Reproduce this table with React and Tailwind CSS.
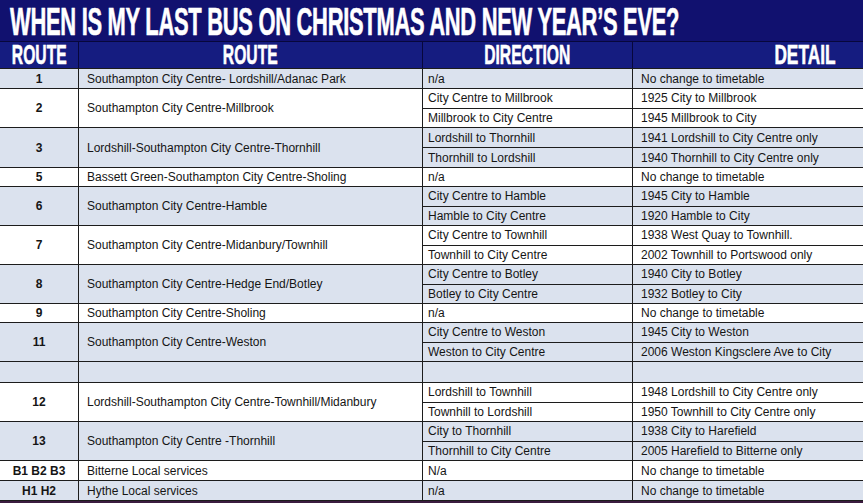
const light = "bg-[#dbe2ee]";
const white = "bg-white";

const rows = [
  { no: "1", route: "Southampton City Centre- Lordshill/Adanac Park", h: "h-[20px]", bg: light, subs: [["n/a", "No change to timetable"]] },
  { no: "2", route: "Southampton City Centre-Millbrook", h: "h-[39px]", bg: white, subs: [["City Centre to Millbrook", "1925 City to Millbrook"], ["Millbrook to City Centre", "1945 Millbrook to City"]] },
  { no: "3", route: "Lordshill-Southampton City Centre-Thornhill", h: "h-[40px]", bg: light, subs: [["Lordshill to Thornhill", "1941 Lordshill to City Centre only"], ["Thornhill to Lordshill", "1940 Thornhill to City Centre only"]] },
  { no: "5", route: "Bassett Green-Southampton City Centre-Sholing", h: "h-[19px]", bg: white, subs: [["n/a", "No change to timetable"]] },
  { no: "6", route: "Southampton City Centre-Hamble", h: "h-[39px]", bg: light, subs: [["City Centre to Hamble", "1945 City to Hamble"], ["Hamble to City Centre", "1920 Hamble to City"]] },
  { no: "7", route: "Southampton City Centre-Midanbury/Townhill", h: "h-[39px]", bg: white, subs: [["City Centre to Townhill", "1938 West Quay to Townhill."], ["Townhill to City Centre", "2002 Townhill to Portswood only"]] },
  { no: "8", route: "Southampton City Centre-Hedge End/Botley", h: "h-[39px]", bg: light, subs: [["City Centre to Botley", "1940 City to Botley"], ["Botley to City Centre", "1932 Botley to City"]] },
  { no: "9", route: "Southampton City Centre-Sholing", h: "h-[19px]", bg: white, subs: [["n/a", "No change to timetable"]] },
  { no: "11", route: "Southampton City Centre-Weston", h: "h-[39px]", bg: light, subs: [["City Centre to Weston", "1945 City to Weston"], ["Weston to City Centre", "2006 Weston Kingsclere Ave to City"]] },
  { no: "", route: "", h: "h-[21px]", bg: light, subs: [["", ""]] },
  { no: "12", route: "Lordshill-Southampton City Centre-Townhill/Midanbury", h: "h-[39px]", bg: white, subs: [["Lordshill to Townhill", "1948 Lordshill to City Centre only"], ["Townhill to Lordshill", "1950 Townhill to City Centre only"]] },
  { no: "13", route: "Southampton City Centre -Thornhill", h: "h-[39px]", bg: light, subs: [["City to Thornhill", "1938 City to Harefield"], ["Thornhill to City Centre", "2005 Harefield to Bitterne only"]] },
  { no: "B1 B2 B3", route: "Bitterne Local services", h: "h-[20px]", bg: white, subs: [["N/a", "No change to timetable"]] },
  { no: "H1 H2", route: "Hythe Local services", h: "h-[20px]", bg: light, subs: [["n/a", "No change to timetable"]] },
];

const display = "font-['Liberation_Sans',Arial,sans-serif] font-bold text-white uppercase whitespace-nowrap [-webkit-text-stroke:0.6px_white]";

const HeadLabel = ({ children, className = "scale-x-[0.58]" }) => (
  <span className={`inline-block ${display} text-[27px] leading-[22px] ${className}`}>{children}</span>
);

const RouteGroup = ({ row }) => (
  <div className={`flex ${row.h} ${row.bg} border-b border-[#1c1c1c]`}>
    <div className="w-[79px] shrink-0 border-r border-[#1c1c1c] flex items-center justify-center font-bold">
      {row.no}
    </div>
    <div className="w-[344px] shrink-0 border-r border-[#1c1c1c] flex items-center pl-2">
      {row.route}
    </div>
    <div className="flex-1 flex flex-col">
      {row.subs.map(([dir, detail], i) => (
        <div key={i} className={`flex-1 flex ${i > 0 ? "border-t border-[#1c1c1c]" : ""}`}>
          <div className="w-[210px] shrink-0 border-r border-[#1c1c1c] flex items-center pl-[5px]">{dir}</div>
          <div className="flex-1 flex items-center pl-2">{detail}</div>
        </div>
      ))}
    </div>
  </div>
);

export default function App() {
  return (
    <div className="w-[863px] h-[503px] overflow-hidden bg-white font-['Liberation_Sans',Arial,sans-serif] text-[12px] text-[#151515]">
      <div className="h-[42px] bg-[#11116f] border-b border-[#07073c] flex items-center pl-[10px]">
        <span className={`inline-block origin-left ${display} text-[38px] leading-[36px] tracking-[-0.5px] scale-x-[0.577] pt-[2px]`}>
          When is my last bus on Christmas and New Year’s Eve?
        </span>
      </div>
      <div className="h-[27px] bg-[#151c80] border-b border-[#1c1c1c] flex">
        <div className="w-[79px] border-r border-[#07073c] flex items-center justify-center">
          <HeadLabel>Route</HeadLabel>
        </div>
        <div className="w-[344px] border-r border-[#07073c] flex items-center justify-center">
          <HeadLabel>Route</HeadLabel>
        </div>
        <div className="w-[210px] border-r border-[#07073c] flex items-center justify-center">
          <HeadLabel>Direction</HeadLabel>
        </div>
        <div className="flex-1 flex items-center justify-end pr-[28px]">
          <HeadLabel className="origin-right scale-x-[0.64]">Detail</HeadLabel>
        </div>
      </div>
      {rows.map((row, i) => (
        <RouteGroup key={i} row={row} />
      ))}
      <div className="h-[2px] bg-[#3b1c40]" />
    </div>
  );
}
